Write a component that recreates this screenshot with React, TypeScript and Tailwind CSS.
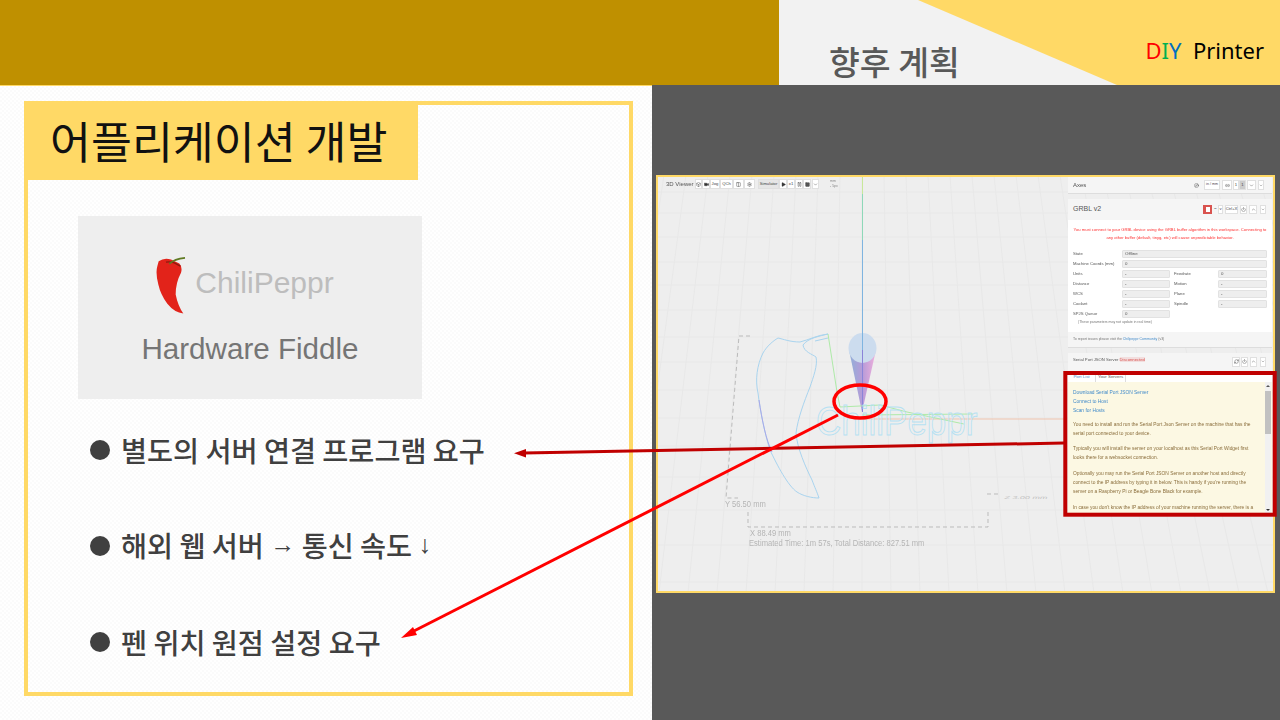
import React from "react";
import { Box, Video, Settings, Play, Pause, Square, ChevronDown, ChevronUp, RefreshCw, Columns2, Link2, Power, Compass } from "lucide-react";

const KR = "font-['Noto_Sans_CJK_KR','Noto_Sans',sans-serif]";
const AR = "font-['Liberation_Sans',Arial,sans-serif]";

function Scene() {
  const xs: number[] = [];
  for (let i = -12; i <= 22; i++) xs.push(i);
  const ys = [192, 213, 237, 262, 285, 310, 337, 362, 390, 418, 446, 477, 510, 545, 582];
  return (
    <svg className="absolute inset-0 w-full h-full" viewBox="658 177 615 414">
      <defs>
        <linearGradient id="cone" x1="0" x2="1" y1="0" y2="0">
          <stop offset="0" stopColor="#8fb0d8" />
          <stop offset="0.5" stopColor="#b79bd8" />
          <stop offset="1" stopColor="#f0b0dc" />
        </linearGradient>
        <linearGradient id="word" gradientUnits="userSpaceOnUse" x1="816" x2="978" y1="0" y2="0">
          <stop offset="0" stopColor="#b5e0f2" />
          <stop offset="0.45" stopColor="#b5d0f2" />
          <stop offset="1" stopColor="#b8b4f0" />
        </linearGradient>
      </defs>
      {xs.map((i) => (
        <line key={i} x1={862 + i * 22} y1={175} x2={862 + i * 29} y2={593} stroke="#e8e8e8" strokeWidth="1" />
      ))}
      {ys.map((y) => (
        <line key={y} x1={656} y1={y} x2={1275} y2={y} stroke="#e8e8e8" strokeWidth="1" />
      ))}
      <path d="M849 350 L862 412 L876 350 Z" fill="url(#cone)" />
      <ellipse cx="862.5" cy="348" rx="14" ry="15" fill="#ccdcee" />
      <line x1="862.5" y1="175" x2="862.5" y2="194" stroke="#c8e89a" strokeWidth="1" />
      <line x1="862.5" y1="194" x2="862.5" y2="240" stroke="#8ed8b8" strokeWidth="1" />
      <line x1="862.5" y1="240" x2="862.5" y2="350" stroke="#7fb4e0" strokeWidth="1" />
      <line x1="862.5" y1="350" x2="862.5" y2="412" stroke="#8a84d8" strokeWidth="1" />
      <line x1="862" y1="419" x2="1067" y2="419" stroke="#f0c4ae" strokeWidth="1" />
      <path
        d="M828 334 C820 336 808 338 803 345 C804 352 812 354 816 357 C818 365 813 378 810 387 C804 402 798 418 796 433 C797 448 806 468 812 480 C815 488 817 492 819 498 C812 498 803 496 797 492 C788 486 777 465 770 450 C765 435 760 410 758 393 C755 380 757 365 763 353 C767 346 773 341 778 338 C783 339 790 342 800 342 C808 340 818 335 828 334 Z"
        fill="none"
        stroke="#a9d4ee"
        strokeWidth="1"
      />
      <path d="M759 400 C762 420 766 440 772 452" fill="none" stroke="#a9a9e8" strokeWidth="1" />
      <path d="M828 338 L815 341" fill="none" stroke="#a9d4ee" strokeWidth="1" />
      <path
        d="M828 334 L837 392 L840 407 L880 405 L907 412 L964 424 M862 415 L973 414"
        fill="none"
        stroke="#aeeaa8"
        strokeWidth="1"
      />
      <g transform="translate(816 435) scale(1 1.16)">
        <text x="0" y="0" fontFamily="'Liberation Sans',Arial,sans-serif" fontSize="35" fill="none" stroke="url(#word)" strokeWidth="0.8">
          ChiliPeppr
        </text>
      </g>
      <path
        d="M750 336 L739 336 L726 498 L738 498 M748 512 L748 527 L988 527 L988 512 M987 494 L1000 494"
        fill="none"
        stroke="#bbbbbb"
        strokeWidth="1"
        strokeDasharray="4 3"
      />
      <g transform="translate(1004 499) skewX(-20) scale(1.5 0.7)">
        <text x="0" y="0" fontFamily="'Liberation Sans',Arial,sans-serif" fontSize="6" fill="#c2c2c2">
          Z 3.00 mm
        </text>
      </g>
    </svg>
  );
}

function Tb({ children, cls = "" }: { children?: React.ReactNode; cls?: string }) {
  return (
    <span className={`flex h-[9.5px] shrink-0 items-center justify-center bg-white border border-[#e0e0e0] text-[#444444] text-[4.2px] whitespace-nowrap ${cls}`}>
      {children}
    </span>
  );
}

const lab = "text-[4.2px] text-[#555555] whitespace-nowrap";
const inp = "flex h-[8.5px] items-center rounded-[1px] bg-[#eeeeee] border border-[#e2e2e2] pl-[2px] text-[4.4px] text-[#555555]";

function Row({ label, value }: { label: string; value: string }) {
  return (
    <div className="flex items-center h-[10px]">
      <span className={`w-[54px] pl-[5px] ${lab}`}>{label}</span>
      <span className={`flex-1 ${inp}`}>{value}</span>
    </div>
  );
}

function Row2({ a, b, c, d }: { a: string; b: string; c: string; d: string }) {
  return (
    <div className="flex items-center h-[10px]">
      <span className={`w-[54px] pl-[5px] ${lab}`}>{a}</span>
      <span className={`w-[48px] ${inp}`}>{b}</span>
      <span className={`w-[48px] pl-[4px] ${lab}`}>{c}</span>
      <span className={`flex-1 ${inp}`}>{d}</span>
    </div>
  );
}

function Screenshot() {
  return (
    <div className={`relative ml-[4px] mt-[90px] h-[418px] w-[619px] overflow-hidden border-2 border-[#ffd966] bg-[#eeeeee] ${AR}`}>
      <Scene />
      <div className="relative flex h-full justify-between pr-[1px] blur-[0.3px]">
        <div className="flex h-full flex-col justify-between">
          <div className="flex h-[14px] items-center ml-[8px]">
            <span className="w-[29px] text-[6px] text-[#555555] whitespace-nowrap">3D Viewer</span>
            <Tb cls="w-[7px]"><Box size={5} /></Tb>
            <Tb cls="w-[8px]"><Video size={5} fill="#333" /></Tb>
            <Tb cls="w-[10px]">Jog</Tb>
            <Tb cls="w-[13px]">QCh</Tb>
            <Tb cls="w-[11px]"><Columns2 size={5} /></Tb>
            <Tb cls="w-[11px]"><Settings size={5} /></Tb>
            <Tb cls="ml-[3px] w-[21px] !bg-[#e6e6e6]">Simulator</Tb>
            <Tb cls="w-[8px]"><Play size={5} fill="#333" /></Tb>
            <Tb cls="w-[8px]">x1</Tb>
            <Tb cls="w-[8px]"><Pause size={5} /></Tb>
            <Tb cls="w-[8px]"><Square size={5} fill="#555" /></Tb>
            <Tb cls="ml-[1px] w-[7px]"><ChevronDown size={5} /></Tb>
            <span className="ml-[11px] flex flex-col text-[3.5px] leading-[5px] text-[#888888]"><span>mm</span><span>- 5px</span></span>
          </div>
          <div className="pl-[91px] pb-[42px] text-[7.6px] leading-[10px] text-[#b5b5b5] whitespace-nowrap">
            <div className="-ml-[24px] mb-[19px] origin-left scale-y-[1.2]">Y 56.50 mm</div>
            <div className="ml-[1px] origin-left scale-y-[1.2]">X 88.49 mm</div>
            <div className="origin-left scale-y-[1.2]">Estimated Time: 1m 57s, Total Distance: 827.51 mm</div>
          </div>
        </div>
        <div className="flex w-[204px] flex-col">
          <div className="flex h-[17px] shrink-0 items-center justify-between border-b border-[#dddddd] bg-[#f5f5f5] pl-[5px] pr-[8px]">
            <span className="text-[6px] text-[#555555]">Axes</span>
            <div className="flex items-center">
              <Compass size={5} className="mr-[5px] text-[#555555]" />
              <Tb cls="w-[16px] !text-[3.6px]">in / mm</Tb>
              <Tb cls="ml-[2px] w-[10px]"><Link2 size={5} /></Tb>
              <Tb cls="ml-[1px] w-[6px]">1</Tb>
              <Tb cls="w-[7px] !bg-[#cccccc]">1</Tb>
              <Tb cls="ml-[1px] w-[9px]"><ChevronDown size={5} /></Tb>
              <Tb cls="ml-[2px] w-[6px]"><ChevronDown size={5} /></Tb>
            </div>
          </div>
          <div className="mt-[5px] h-[149px] shrink-0 border-b border-[#dddddd] bg-[#f5f5f5]">
            <div className="flex h-[21px] items-center justify-between pl-[5px] pr-[6px]">
              <span className="text-[7px] text-[#555555]">GRBL v2</span>
              <div className="flex items-center">
                <span className="flex h-[9.5px] w-[9px] items-center justify-center bg-[#d9534f]"><span className="h-[5px] w-[4px] bg-white" /></span>
                <span className="ml-[2px] w-[4px] text-[4.5px] text-[#555555]">~</span>
                <Tb cls="w-[5px]">v</Tb>
                <Tb cls="ml-[2px] w-[13px]">Ctrl+X</Tb>
                <Tb cls="ml-[2px] w-[7px]"><Power size={5} /></Tb>
                <Tb cls="ml-[2px] w-[8px]"><ChevronUp size={5} /></Tb>
                <Tb cls="ml-[3px] w-[6px]"><ChevronDown size={5} /></Tb>
              </div>
            </div>
            <div className="h-[112px] bg-white pt-[6px] pr-[5px] pl-[5px]">
              <p className="text-center text-[4.15px] leading-[8px] text-[#ff3030] whitespace-nowrap">
                You must connect to your GRBL device using the GRBL buffer algorithm in this workspace. Connecting to
                <br />
                any other buffer (default, tinyg, etc) will cause unpredictable behavior.
              </p>
              <div className="-ml-[5px] mt-[7px]">
                <Row label="State" value="Offline" />
                <Row label="Machine Coords (mm)" value="0" />
                <Row2 a="Units" b="-" c="Feedrate" d="0" />
                <Row2 a="Distance" b="-" c="Motion" d="-" />
                <Row2 a="WCS" b="-" c="Plane" d="-" />
                <Row2 a="Coolant" b="-" c="Spindle" d="-" />
                <div className="flex items-center h-[10px]">
                  <span className={`w-[54px] pl-[5px] ${lab}`}>SPJS Queue</span>
                  <span className={`w-[48px] ${inp}`}>0</span>
                </div>
                <div className="pl-[10px] text-[3.5px] leading-[7px] text-[#777777] whitespace-nowrap">(These parameters may not update in real time)</div>
              </div>
            </div>
            <div className="flex h-[15px] items-center pl-[5px] text-[3.5px] text-[#777777] whitespace-nowrap">
              To report issues please visit the&nbsp;<span className="text-[#428bca]">Chilipeppr Community</span>&nbsp;(v3)
            </div>
          </div>
          <div className="mt-[5px] flex h-[18px] shrink-0 items-start justify-between bg-[#f5f5f5] pl-[5px] pr-[6px] pt-[4px]">
            <span className="text-[4.2px] leading-[6px] text-[#555555] whitespace-nowrap">Serial Port JSON Server <span className="bg-[#f2dede] text-[#d9534f]">Disconnected</span></span>
            <div className="flex items-center">
              <Tb cls="w-[8px]"><RefreshCw size={5} /></Tb>
              <Tb cls="ml-[1px] w-[7px]"><Power size={5} /></Tb>
              <Tb cls="ml-[2px] w-[7px]"><ChevronUp size={5} /></Tb>
              <Tb cls="ml-[3px] w-[6px]"><ChevronDown size={5} /></Tb>
            </div>
          </div>
          <div className="flex h-[11px] shrink-0 items-end bg-white pl-[3px] text-[4.4px] whitespace-nowrap">
            <span className="flex h-[10px] w-[21px] items-center justify-center text-[#428bca]">Port List</span>
            <span className="ml-[3px] flex h-[10px] w-[31px] items-center justify-center border-x border-[#dddddd] text-[#555555]">Your Servers</span>
          </div>
          <div className="relative h-[131px] shrink-0 overflow-hidden bg-[#fcf8e3] pl-[5px] pt-[6px] text-[4.85px] leading-[9px] text-[#8a6d3b] whitespace-nowrap">
            <div className="text-[#428bca]">
              Download Serial Port JSON Server
              <br />
              Connect to Host
              <br />
              Scan for Hosts
            </div>
            <p className="mt-[4.5px]">
              You need to install and run the Serial Port Json Server on the machine that has the
              <br />
              serial port connected to your device.
            </p>
            <p className="mt-[6.7px]">
              Typically you will install the server on your localhost as this Serial Port Widget first
              <br />
              looks there for a websocket connection.
            </p>
            <p className="mt-[6.7px]">
              Optionally you may run the Serial Port JSON Server on another host and directly
              <br />
              connect to the IP address by typing it in below. This is handy if you're running the
              <br />
              server on a Raspberry Pi or Beagle Bone Black for example.
            </p>
            <p className="mt-[6.7px]">
              In case you don't know the IP address of your machine running the server, there is a
            </p>
            <div className="absolute right-[1px] top-0 bottom-0 flex w-[6px] flex-col items-center bg-[#f1f1f1]">
              <span className="mt-[3px] h-0 w-0 border-x-2 border-b-2 border-x-transparent border-b-[#555555]" />
              <span className="mt-[4px] h-[43px] w-[6px] bg-[#c1c1c1]" />
              <span className="mt-auto mb-[2px] h-0 w-0 border-x-2 border-t-2 border-x-transparent border-t-[#333333]" />
            </div>
          </div>
        </div>
      </div>
    </div>
  );
}

function Arrow({ children }: { children: React.ReactNode }) {
  return <span className={`${AR} relative -top-[4px] font-normal text-[25px]`}>{children}</span>;
}

function Bullet({ children }: { children: React.ReactNode }) {
  return (
    <div className="flex h-[40px] items-center gap-[11px] pl-[62px] text-[#404040]">
      <span className="h-[20px] w-[20px] shrink-0 rounded-full bg-[#404040]" />
      <span className={`${KR} text-[28.3px] font-medium whitespace-nowrap`}>{children}</span>
    </div>
  );
}

export default function App() {
  return (
    <div className="relative flex h-[720px] w-[1280px] flex-col overflow-hidden bg-white">
      <header className="flex h-[85px] shrink-0">
        <div className="w-[779px] bg-[#bf9000]" />
        <div className="relative flex flex-1 bg-[#f2f2f2]">
          <svg className="absolute inset-0 h-full w-full" viewBox="779 0 501 85">
            <polygon points="918,0 1280,0 1280,85 1117,85" fill="#ffd966" />
          </svg>
          <span className={`relative ml-[50px] mt-[39px] h-[44px] text-[33.5px] leading-[44px] font-medium text-[#595959] whitespace-nowrap ${KR}`}>향후 계획</span>
          <span className="relative ml-auto mr-[16px] mt-[34px] h-[33px] font-['Noto_Sans',sans-serif] text-[22px] leading-[33px] text-black whitespace-pre">
            <span className="text-[#ff0000]">D</span>
            <span className="text-[#00b050]">I</span>
            <span className="text-[#0070c0]">Y</span>
            {"  Printer"}
          </span>
        </div>
      </header>
      <main className="flex flex-1">
        <section className="w-[652px] border-t border-[#ffd966] bg-[repeating-conic-gradient(#fbfbfb_0_25%,#ffffff_0_50%)] bg-[length:4px_4px] pl-[24px] pt-[15px]">
          <div className="h-[595px] w-[609px] border-4 border-[#ffd966]">
            <div className="-ml-[4px] -mt-[4px] flex h-[79px] w-[394px] items-center bg-[#ffd966] pl-[26px]">
              <h1 className={`text-[44.5px] font-normal text-[#111111] whitespace-nowrap ${KR}`}>어플리케이션 개발</h1>
            </div>
            <div className="ml-[50px] mt-[36px] flex h-[183px] w-[344px] flex-col items-center bg-[#eeeeee] pt-[40px]">
              <div className="flex items-center gap-[9px] pr-[10px]">
                <svg width="30" height="59" viewBox="260 140 90 176">
                  <path
                    d="M268 155 Q285 143 305 150 L330 162 Q340 172 335 190 Q319 220 319 255 Q326 290 342 312 Q316 310 294 283 Q274 256 267 225 Q258 190 264 170 Z"
                    fill="#e2231a"
                  />
                  <path d="M290 158 Q300 155 315 160 L333 170" fill="none" stroke="#8c1a10" strokeWidth="4" />
                  <path d="M300 163 Q315 148 347 145" fill="none" stroke="#5f7a22" strokeWidth="5" />
                </svg>
                <span className={`${AR} pb-[5px] text-[30px] leading-[40px] text-[#bdbdbd]`}>ChiliPeppr</span>
              </div>
              <div className={`${AR} mt-[14px] text-[29.6px] leading-[40px] text-[#757575]`}>Hardware Fiddle</div>
            </div>
            <div className="mt-[31px] flex flex-col gap-[56px]">
              <Bullet>별도의 서버 연결 프로그램 요구</Bullet>
              <Bullet>해외 웹 서버 <Arrow>→</Arrow> 통신 속도 <Arrow>↓</Arrow></Bullet>
              <Bullet>펜 위치 원점 설정 요구</Bullet>
            </div>
          </div>
        </section>
        <section className="flex-1 bg-[#595959]">
          <Screenshot />
        </section>
      </main>
      <svg className="pointer-events-none absolute inset-0 h-full w-full" viewBox="0 0 1280 720">
        <rect x="1065.3" y="373" width="209.4" height="141.7" fill="none" stroke="#c00000" strokeWidth="4" />
        <line x1="1064" y1="443" x2="524" y2="453" stroke="#c00000" strokeWidth="3" />
        <polygon points="514,453.2 526,449 526,457.5" fill="#c00000" />
        <ellipse cx="860" cy="401.5" rx="26" ry="16.5" fill="none" stroke="#ff0000" strokeWidth="3.5" />
        <line x1="838" y1="415" x2="410" y2="633" stroke="#ff0000" strokeWidth="3" />
        <polygon points="401,638 413,627 417,635" fill="#ff0000" />
      </svg>
    </div>
  );
}
